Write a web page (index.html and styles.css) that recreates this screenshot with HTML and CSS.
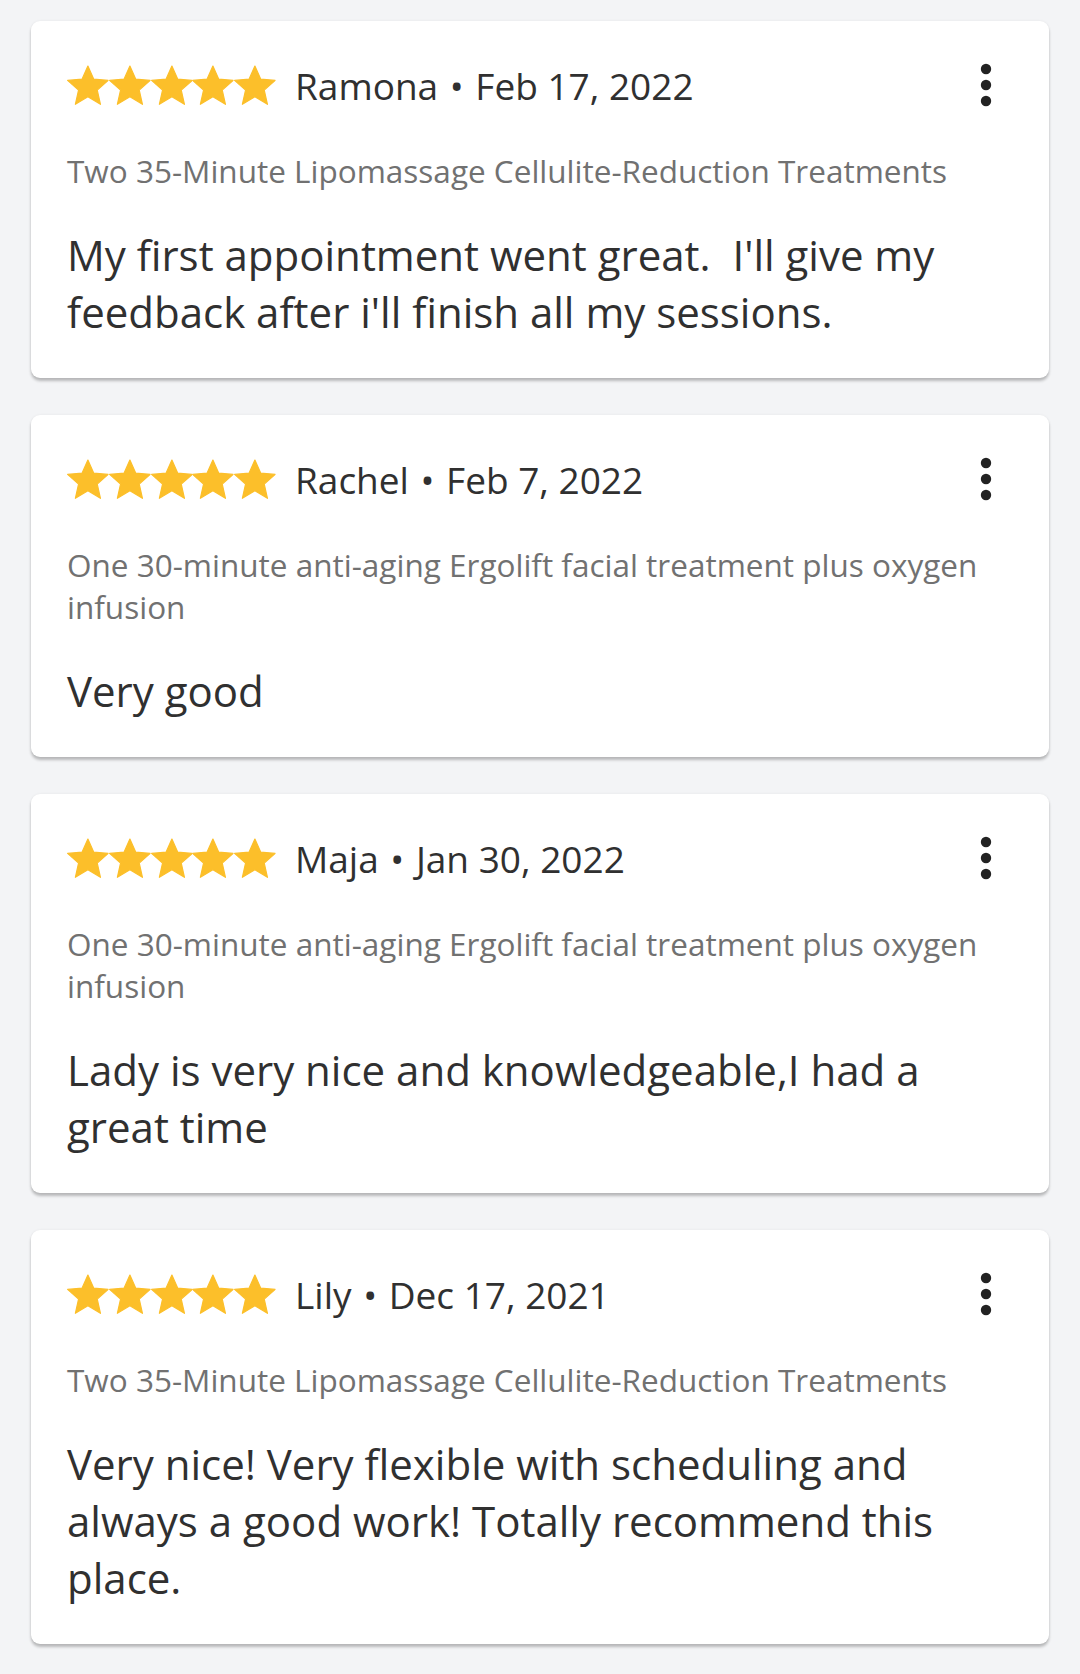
FILE: index.html
```html
<!DOCTYPE html>
<html>
  <head>
    <meta charset="UTF-8">
    <meta name="viewport" content="width=device-width, initial-scale=1.0">
    <title>Reviews</title>
    <link rel="stylesheet" href="styles.css">
  </head>
  <body>
    <svg class="defs" width="0" height="0">
      <symbol id="star" viewBox="0 0 42 41">
        <polygon points="21,1 26.8,14 41.4,15.4 30.4,25.1 33.6,39.4 21,31.9 8.4,39.4 11.6,25.1 0.6,15.4 15.2,14" fill="#fcbf2a" stroke="#fcbf2a" stroke-width="1.2" stroke-linejoin="round"/>
      </symbol>
      <symbol id="dots" viewBox="0 0 12 44">
        <circle cx="6" cy="6" r="5.2"/>
        <circle cx="6" cy="22" r="5.2"/>
        <circle cx="6" cy="38" r="5.2"/>
      </symbol>
    </svg>

    <div class="reviews">

      <div class="card">
        <div class="head">
          <div class="stars">
            <svg><use href="#star"/></svg><svg><use href="#star"/></svg><svg><use href="#star"/></svg><svg><use href="#star"/></svg><svg><use href="#star"/></svg>
          </div>
          <span class="who">Ramona <span class="sep">&bull;</span> Feb 17, 2022</span>
          <button class="more"><svg><use href="#dots"/></svg></button>
        </div>
        <p class="deal">Two 35-Minute Lipomassage Cellulite-Reduction Treatments</p>
        <p class="text">My first appointment went great.&nbsp; I'll give my feedback after i'll finish all my sessions.</p>
      </div>

      <div class="card">
        <div class="head">
          <div class="stars">
            <svg><use href="#star"/></svg><svg><use href="#star"/></svg><svg><use href="#star"/></svg><svg><use href="#star"/></svg><svg><use href="#star"/></svg>
          </div>
          <span class="who">Rachel <span class="sep">&bull;</span> Feb 7, 2022</span>
          <button class="more"><svg><use href="#dots"/></svg></button>
        </div>
        <p class="deal">One 30-minute anti-aging Ergolift facial treatment plus oxygen infusion</p>
        <p class="text">Very good</p>
      </div>

      <div class="card">
        <div class="head">
          <div class="stars">
            <svg><use href="#star"/></svg><svg><use href="#star"/></svg><svg><use href="#star"/></svg><svg><use href="#star"/></svg><svg><use href="#star"/></svg>
          </div>
          <span class="who">Maja <span class="sep">&bull;</span> Jan 30, 2022</span>
          <button class="more"><svg><use href="#dots"/></svg></button>
        </div>
        <p class="deal">One 30-minute anti-aging Ergolift facial treatment plus oxygen infusion</p>
        <p class="text">Lady is very nice and knowledgeable,I had a great time</p>
      </div>

      <div class="card">
        <div class="head">
          <div class="stars">
            <svg><use href="#star"/></svg><svg><use href="#star"/></svg><svg><use href="#star"/></svg><svg><use href="#star"/></svg><svg><use href="#star"/></svg>
          </div>
          <span class="who">Lily <span class="sep">&bull;</span> Dec 17, 2021</span>
          <button class="more"><svg><use href="#dots"/></svg></button>
        </div>
        <p class="deal">Two 35-Minute Lipomassage Cellulite-Reduction Treatments</p>
        <p class="text">Very nice! Very flexible with scheduling and always a good work! Totally recommend this place.</p>
      </div>

    </div>
  </body>
</html>
```

FILE: styles.css
```css
*{
    margin: 0;
    padding: 0;
    box-sizing: border-box;
}
:root{
    --bg-color: #f3f4f6;
    --text-color: #303030;
    --muted-color: #717171;
}
body{
    background: var(--bg-color);
    color: var(--text-color);
    font-family: 'Open Sans', 'Noto Sans', sans-serif;
}
.defs{
    position: absolute;
}
.reviews{
    display: flex;
    flex-direction: column;
    gap: 37px;
    padding: 21px 31px;
}
.card{
    background: white;
    border-radius: 9px;
    padding: 36px 36px 38px;
    box-shadow: 0 3px 3px rgba(0,0,0,0.24), 0 0 3px rgba(0,0,0,0.06);
}
.head{
    display: flex;
    align-items: center;
    height: 56px;
}
.stars{
    display: flex;
}
.stars svg{
    width: 41.8px;
    height: 41px;
}
.who{
    margin-left: 19px;
    font-size: 37px;
    flex: 1;
}
.sep{
    margin: 0 2px;
}
.more{
    width: 56px;
    height: 56px;
    border: none;
    background: none;
    display: flex;
    align-items: center;
    justify-content: center;
    margin-right: -1px;
}
.more svg{
    width: 12px;
    height: 44px;
    fill: #222222;
}
.deal{
    margin-top: 37px;
    font-size: 31.5px;
    line-height: 42px;
    color: var(--muted-color);
}
.text{
    margin-top: 34px;
    font-size: 42px;
    line-height: 57px;
}
```
